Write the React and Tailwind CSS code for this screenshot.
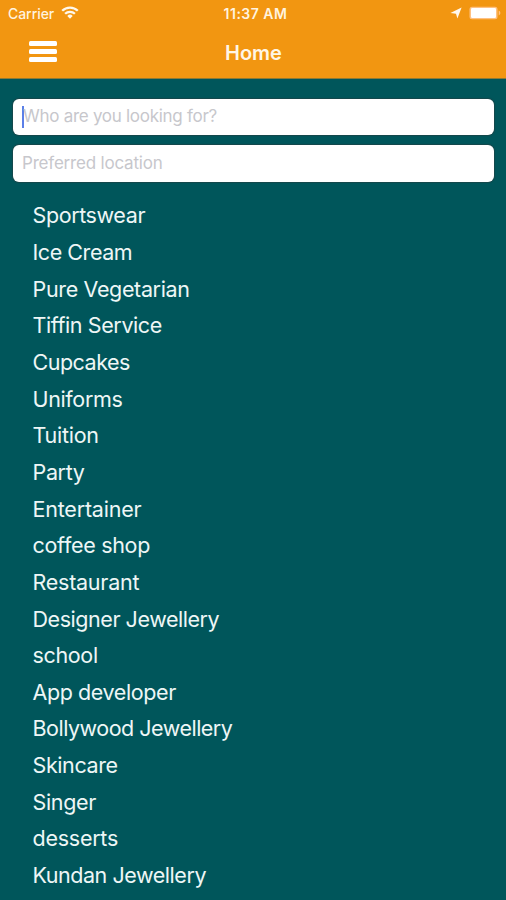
const categories = [
  ["Sportswear", "tracking-[-0.4px]"],
  ["Ice Cream", "tracking-[-0.45px]"],
  ["Pure Vegetarian", "tracking-[-0.35px]"],
  ["Tiffin Service", "tracking-[-0.4px]"],
  ["Cupcakes", "tracking-[-0.5px]"],
  ["Uniforms", "tracking-[-0.35px]"],
  ["Tuition", "tracking-[-0.25px]"],
  ["Party", "tracking-[-0.35px]"],
  ["Entertainer", "tracking-[-0.2px]"],
  ["coffee shop", "tracking-[-0.3px]"],
  ["Restaurant", "tracking-[-0.25px]"],
  ["Designer Jewellery", "tracking-[-0.45px]"],
  ["school", "tracking-[-0.35px]"],
  ["App developer", "tracking-[-0.4px]"],
  ["Bollywood Jewellery", "tracking-[-0.5px]"],
  ["Skincare", "tracking-[-0.4px]"],
  ["Singer", "tracking-[-0.35px]"],
  ["desserts", "tracking-[-0.25px]"],
  ["Kundan Jewellery", "tracking-[-0.45px]"],
];

function StatusBar() {
  return (
    <div className="grid h-[27px] grid-cols-3 items-center pl-2 pr-[3px] text-[14px] leading-[27px] text-[#fff3df]">
      <div className="flex items-center gap-[7px]">
        <span className="font-medium tracking-[-0.05px]">Carrier</span>
        <svg width="18" height="13" viewBox="0 0 18 13" fill="none" stroke="#fff8ec" strokeWidth="2.3" className="-mt-[2px]">
          <path d="M1.2 4.8a11 11 0 0 1 15.6 0" />
          <path d="M4.1 7.8a7 7 0 0 1 9.8 0" />
          <path d="M9 12.7 6.3 9.9a3.8 3.8 0 0 1 5.4 0Z" fill="#fff8ec" stroke="none" />
        </svg>
      </div>
      <span className="whitespace-nowrap text-center font-semibold tracking-[0.5px]">11:37 AM</span>
      <div className="flex items-center justify-end gap-[7px] pb-[2px]">
        <svg width="12" height="12" viewBox="0 0 12 12" fill="#fff8ec">
          <path d="M11.6.5 7.4 11.6 6 6.7.4 6.1Z" />
        </svg>
        <svg width="34" height="14" viewBox="0 0 34 14">
          <rect x="0.5" y="0.7" width="28" height="12.6" rx="2.5" fill="#ffc182" />
          <rect x="2" y="2" width="25" height="10" rx="1.2" fill="#fff" />
          <path d="M29.7 4.6c2.2.8 2.2 4 0 4.8Z" fill="#ffc182" />
        </svg>
      </div>
    </div>
  );
}

export default function App() {
  return (
    <div className="flex h-[900px] w-[506px] flex-col overflow-hidden bg-[#00565b] font-['Inter','Liberation_Sans',sans-serif]">
      <header className="h-[79px] shrink-0 border-b border-[#8c7935] bg-[#f29611]">
        <StatusBar />
        <div className="grid h-[51px] grid-cols-3 items-center">
          <button aria-label="Menu" className="ml-[29px] flex w-7 flex-col gap-[3px] pb-[2px]">
            <span className="h-[5px] w-full rounded-[1.5px] bg-white" />
            <span className="h-[5px] w-full rounded-[1.5px] bg-white" />
            <span className="h-[5px] w-full rounded-[1.5px] bg-white" />
          </button>
          <h1 className="pl-px text-center text-[20px] font-semibold leading-6 text-[#fff6e6]">Home</h1>
        </div>
      </header>
      <div className="flex shrink-0 flex-col gap-[10px] pl-[13px] pr-3 pt-[19.5px] text-[17px] text-[#c7c7cc]">
        <div className="flex h-[36.5px] items-center rounded-[6px] bg-white pl-[9px] shadow-[0_0_1px_1px_#16474b]">
          <span className="h-[22px] w-[2px] shrink-0 bg-[#5b7fe8]" />
          <span className="-ml-[1px] tracking-[-0.28px]">Who are you looking for?</span>
        </div>
        <div className="flex h-[36.5px] items-center rounded-[6px] bg-white pl-[9px] shadow-[0_0_1px_1px_#16474b]">
          <span className="tracking-[-0.2px]">Preferred location</span>
        </div>
      </div>
      <ul className="mt-[15.8px] pl-[32.5px]">
        {categories.map(([name, tracking]) => (
          <li key={name} className={`h-[36.67px] whitespace-nowrap text-[21.5px] leading-[36.67px] text-[#eef6f6] ${tracking}`}>{name}</li>
        ))}
      </ul>
    </div>
  );
}
